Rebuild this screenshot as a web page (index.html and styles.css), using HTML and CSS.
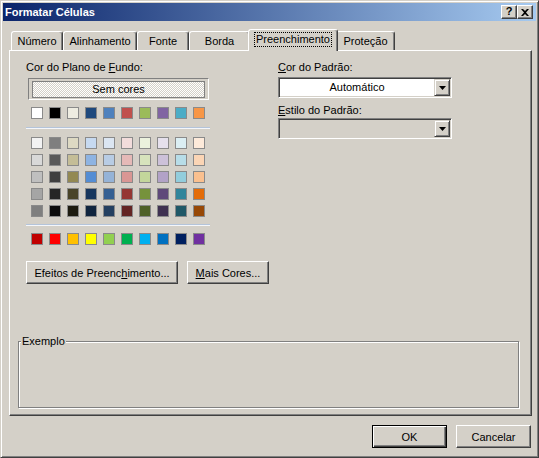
FILE: index.html
```html
<!DOCTYPE html>
<html lang="pt">
<head>
<meta charset="utf-8">
<title>Formatar Células</title>
<link rel="stylesheet" href="styles.css">
</head>
<body>
<div class="dialog">
  <div class="titlebar">
    <span class="title">Formatar Células</span>
    <div class="tb-buttons">
      <span class="tb-btn tb-help">?</span>
      <span class="tb-btn"><svg width="8" height="7" viewBox="0 0 8 7"><path d="M0 0h2l2 2 2-2h2L5 3.5 8 7H6L4 5 2 7H0l3-3.5z" fill="#000"/></svg></span>
    </div>
  </div>
  <div class="content">
    <div class="tabs">
      <div class="tab w-num">Número</div>
      <div class="tab w-ali">Alinhamento</div>
      <div class="tab w-fon">Fonte</div>
      <div class="tab w-bor">Borda</div>
      <div class="tab active w-pre"><span class="focus">Preenchimento</span></div>
      <div class="tab w-pro">Proteção</div>
    </div>
    <div class="panel">
      <div class="cols">
        <div class="left">
          <div class="label">Cor do Plano de <u>F</u>undo:</div>
          <div class="nofill"><div class="nofill-inner">Sem cores</div></div>
          <div class="swrow first">
            <div class="sw" style="background:#ffffff"></div>
            <div class="sw" style="background:#000000"></div>
            <div class="sw" style="background:#eeece1"></div>
            <div class="sw" style="background:#1f497d"></div>
            <div class="sw" style="background:#4f81bd"></div>
            <div class="sw" style="background:#c0504d"></div>
            <div class="sw" style="background:#9bbb59"></div>
            <div class="sw" style="background:#8064a2"></div>
            <div class="sw" style="background:#4bacc6"></div>
            <div class="sw" style="background:#f79646"></div>
          </div>
          <div class="sep"></div>
          <div class="grid">
            <div class="sw" style="background:#f2f2f2"></div>
            <div class="sw" style="background:#7f7f7f"></div>
            <div class="sw" style="background:#ddd9c3"></div>
            <div class="sw" style="background:#c6d9f0"></div>
            <div class="sw" style="background:#dbe5f1"></div>
            <div class="sw" style="background:#f2dcdb"></div>
            <div class="sw" style="background:#ebf1dd"></div>
            <div class="sw" style="background:#e5e0ec"></div>
            <div class="sw" style="background:#dbeef3"></div>
            <div class="sw" style="background:#fdeada"></div>

            <div class="sw" style="background:#d8d8d8"></div>
            <div class="sw" style="background:#595959"></div>
            <div class="sw" style="background:#c4bd97"></div>
            <div class="sw" style="background:#8db3e2"></div>
            <div class="sw" style="background:#b8cce4"></div>
            <div class="sw" style="background:#e5b9b7"></div>
            <div class="sw" style="background:#d7e3bc"></div>
            <div class="sw" style="background:#ccc1d9"></div>
            <div class="sw" style="background:#b7dde8"></div>
            <div class="sw" style="background:#fbd5b5"></div>

            <div class="sw" style="background:#bfbfbf"></div>
            <div class="sw" style="background:#3f3f3f"></div>
            <div class="sw" style="background:#938953"></div>
            <div class="sw" style="background:#548dd4"></div>
            <div class="sw" style="background:#95b3d7"></div>
            <div class="sw" style="background:#d99694"></div>
            <div class="sw" style="background:#c3d69b"></div>
            <div class="sw" style="background:#b2a2c7"></div>
            <div class="sw" style="background:#92cddc"></div>
            <div class="sw" style="background:#fac08f"></div>

            <div class="sw" style="background:#a5a5a5"></div>
            <div class="sw" style="background:#262626"></div>
            <div class="sw" style="background:#494429"></div>
            <div class="sw" style="background:#17365d"></div>
            <div class="sw" style="background:#366092"></div>
            <div class="sw" style="background:#953734"></div>
            <div class="sw" style="background:#76923c"></div>
            <div class="sw" style="background:#5f497a"></div>
            <div class="sw" style="background:#31859b"></div>
            <div class="sw" style="background:#e36c09"></div>

            <div class="sw" style="background:#7f7f7f"></div>
            <div class="sw" style="background:#0c0c0c"></div>
            <div class="sw" style="background:#1d1b10"></div>
            <div class="sw" style="background:#0f243e"></div>
            <div class="sw" style="background:#244061"></div>
            <div class="sw" style="background:#632423"></div>
            <div class="sw" style="background:#4f6128"></div>
            <div class="sw" style="background:#3f3151"></div>
            <div class="sw" style="background:#205867"></div>
            <div class="sw" style="background:#974806"></div>
          </div>
          <div class="sep sep2"></div>
          <div class="swrow">
            <div class="sw" style="background:#c00000"></div>
            <div class="sw" style="background:#ff0000"></div>
            <div class="sw" style="background:#ffc000"></div>
            <div class="sw" style="background:#ffff00"></div>
            <div class="sw" style="background:#92d050"></div>
            <div class="sw" style="background:#00b050"></div>
            <div class="sw" style="background:#00b0f0"></div>
            <div class="sw" style="background:#0070c0"></div>
            <div class="sw" style="background:#002060"></div>
            <div class="sw" style="background:#7030a0"></div>
          </div>
        </div>
        <div class="right">
          <div class="label"><u>C</u>or do Padrão:</div>
          <div class="combo">
            <div class="combo-text">Automático</div>
            <div class="combo-btn"><svg width="7" height="4" viewBox="0 0 7 4"><path d="M0 0h7L3.5 4z" fill="#000"/></svg></div>
          </div>
          <div class="label label2"><u>E</u>stilo do Padrão:</div>
          <div class="combo disabled">
            <div class="combo-text"></div>
            <div class="combo-btn"><svg width="7" height="4" viewBox="0 0 7 4"><path d="M0 0h7L3.5 4z" fill="#000"/></svg></div>
          </div>
        </div>
      </div>
      <div class="btnrow">
        <div class="btn w-fx">Efeitos de Preenc<u>h</u>imento...</div>
        <div class="btn w-more"><u>M</u>ais Cores...</div>
      </div>
      <fieldset class="sample"><legend>Exemplo</legend></fieldset>
    </div>
    <div class="footer">
      <div class="btn btn-default w-dlg">OK</div>
      <div class="btn w-dlg">Cancelar</div>
    </div>
  </div>
</div>
</body>
</html>
```

FILE: styles.css
```css
* { box-sizing: border-box; }
html, body { margin: 0; padding: 0; }
body {
  width: 539px;
  height: 458px;
  background: #d4d0c8;
  font-family: "Liberation Sans", Arial, sans-serif;
  font-size: 11px;
  color: #000;
  overflow: hidden;
}
.dialog {
  width: 539px;
  height: 458px;
  border: 1px solid;
  border-color: #d4d0c8 #404040 #404040 #d4d0c8;
  box-shadow: inset 1px 1px #fff, inset -1px -1px #808080;
  padding: 2px;
  background: #d4d0c8;
  display: flex;
  flex-direction: column;
}
.titlebar {
  height: 18px;
  flex: none;
  background: linear-gradient(to right, #0a246a, #a6caf0);
  display: flex;
  align-items: center;
  justify-content: space-between;
  padding: 0 3px 0 2px;
}
.title {
  color: #fff;
  font-weight: bold;
  font-size: 11px;
  line-height: 13px;
}
.tb-buttons { display: flex; }
.tb-btn {
  width: 16px;
  height: 14px;
  background: #d4d0c8;
  border: 1px solid;
  border-color: #fff #404040 #404040 #fff;
  box-shadow: inset -1px -1px #808080;
  display: flex;
  align-items: center;
  justify-content: center;
  font-weight: bold;
  font-size: 11px;
  line-height: 11px;
}
.tb-help { padding-bottom: 1px; }
.content {
  flex: 1;
  display: flex;
  flex-direction: column;
  padding: 8px 4px 0 6px;
}
.tabs {
  height: 21px;
  flex: none;
  display: flex;
  align-items: flex-end;
  padding-left: 2px;
  position: relative;
  z-index: 1;
}
.tab {
  height: 19px;
  border: 1px solid;
  border-bottom: none;
  border-color: #fff #404040 transparent #fff;
  box-shadow: inset -1px 0 #808080;
  border-radius: 3px 3px 0 0;
  display: flex;
  align-items: center;
  justify-content: center;
  background: #d4d0c8;
  padding-bottom: 1px;
}
.tab.active {
  height: 22px;
  margin: 0 -2px -1px;
  padding-bottom: 3px;
  position: relative;
  z-index: 2;
}
.focus {
  border: 1px dotted #000;
  padding: 0 1px;
  line-height: 13px;
}
.w-num { width: 52px; }
.w-ali { width: 74px; }
.w-fon { width: 52px; }
.w-bor { width: 61px; }
.w-pre { width: 90px; }
.w-pro { width: 59px; }
.panel {
  flex: 1;
  border: 1px solid;
  border-color: #fff #404040 #404040 #fff;
  box-shadow: inset -1px -1px #808080;
  padding: 10px 10px 0 8px;
  display: flex;
  flex-direction: column;
}
.cols {
  display: flex;
  margin-left: 8px;
}
.left { width: 184px; }
.right { width: 174px; margin-left: 68px; }
.label { line-height: 13px; height: 13px; white-space: nowrap; }
.nofill {
  margin: 4px 0 0 2px;
  width: 181px;
  height: 22px;
  border: 1px solid;
  border-color: #808080 #fff #fff #808080;
  padding: 2px 3px 1px 3px;
}
.nofill-inner {
  height: 17px;
  border: 1px solid #808080;
  background: repeating-conic-gradient(#ffffff 0 25%, #d4d0c8 0 50%) 0 0 / 2px 2px;
  text-align: center;
  line-height: 15px;
}
.swrow {
  display: flex;
  gap: 6px;
  padding-left: 5px;
}
.swrow.first { margin-top: 7px; }
.sw {
  width: 12px;
  height: 12px;
  border: 1px solid #8a8a8a;
}
.sep {
  height: 2px;
  border-top: 1px solid #b4c4da;
  border-bottom: 1px solid #f4f6fa;
  margin: 8px 0 8px 0;
}
.sep2 { margin: 7px 0 7px 0; }
.grid {
  display: grid;
  grid-template-columns: repeat(10, 12px);
  column-gap: 6px;
  row-gap: 5px;
  padding-left: 5px;
}
.label2 { margin-top: 6px; }
.combo {
  margin-top: 3px;
  width: 174px;
  height: 21px;
  border: 1px solid;
  border-color: #808080 #fff #fff #808080;
  box-shadow: inset 1px 1px #404040, inset -1px -1px #d4d0c8;
  padding: 1px;
  background: #fff;
  display: flex;
}
.combo.disabled { background: #d4d0c8; margin-top: 1px; }
.combo-text {
  flex: 1;
  text-align: center;
  line-height: 17px;
}
.combo-btn {
  width: 16px;
  height: 17px;
  background: #d4d0c8;
  border: 1px solid;
  border-color: #d4d0c8 #404040 #404040 #d4d0c8;
  box-shadow: inset 1px 1px #fff, inset -1px -1px #808080;
  display: flex;
  align-items: center;
  justify-content: center;
}
.btnrow {
  display: flex;
  gap: 9px;
  margin: 16px 0 0 8px;
}
.btn {
  height: 23px;
  border: 1px solid;
  border-color: #fff #404040 #404040 #fff;
  box-shadow: inset -1px -1px #808080;
  display: flex;
  align-items: center;
  justify-content: center;
  white-space: nowrap;
  background: #d4d0c8;
}
.w-fx { width: 152px; }
.w-more { width: 82px; }
.sample {
  margin: 51px 0 0 0;
  padding: 0;
  height: 73px;
  width: 501px;
  border: 1px solid #808080;
  box-shadow: inset 1px 1px #fff, 1px 1px #fff;
  min-width: 0;
}
.sample legend {
  margin-left: 2px;
  padding: 0 1px;
  line-height: 13px;
  background: #d4d0c8;
}
.footer {
  height: 39px;
  flex: none;
  display: flex;
  justify-content: flex-end;
  gap: 9px;
  padding: 9px 1px 0 0;
}
.w-dlg { width: 75px; }
.btn-default {
  border: 1px solid #000;
  box-shadow: inset 1px 1px #fff, inset -1px -1px #404040, inset -2px -2px #808080;
}
```
